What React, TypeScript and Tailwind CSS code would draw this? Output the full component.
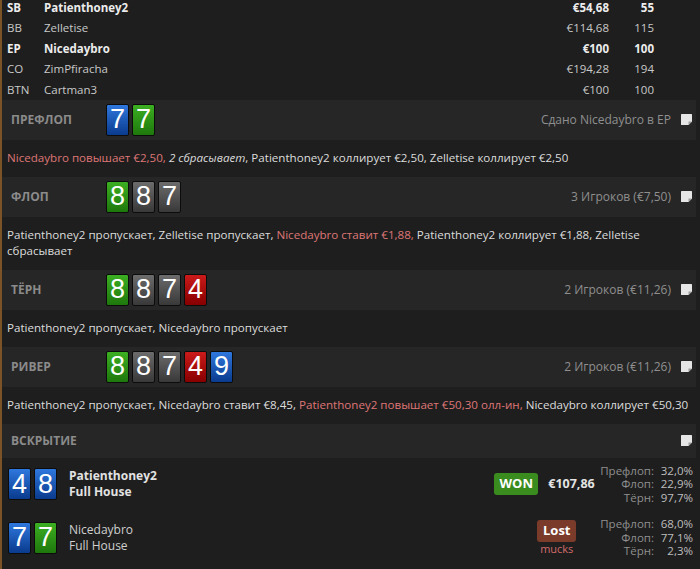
import React from "react";

type Suit = "b" | "g" | "k" | "r";

const suitClass: Record<Suit, string> = {
  b: "bg-linear-to-b from-[#2f78de] to-[#0a3b8e]",
  g: "bg-linear-to-b from-[#3caf22] to-[#1e780c]",
  k: "bg-linear-to-b from-[#6c6c6c] to-[#393939]",
  r: "bg-linear-to-b from-[#cc1a1a] to-[#870000]",
};

function Card({ v, s }: { v: string; s: Suit }) {
  return (
    <div
      className={`w-[23px] h-[32px] rounded-[2px] border border-[#0c0c0c] flex items-center justify-center text-white text-[27px] leading-none font-['Liberation_Sans'] ${suitClass[s]}`}
    >
      {v}
    </div>
  );
}

function Cards({ cards }: { cards: [string, Suit][] }) {
  return (
    <div className="flex gap-[3px]">
      {cards.map(([v, s], i) => (
        <Card key={i} v={v} s={s} />
      ))}
    </div>
  );
}

function NoteIcon() {
  return (
    <svg width="13" height="13" viewBox="0 0 13 13" className="shrink-0">
      <path d="M1.5 1 H11.5 Q12 1 12 1.5 V8.5 L8.5 12 H1.5 Q1 12 1 11.5 V1.5 Q1 1 1.5 1 Z" fill="#e6e6e6" />
      <path d="M12 8.5 L8.5 8.5 L8.5 12 Z" fill="#9c9c9c" />
    </svg>
  );
}

function StreetHeader({
  label,
  cards,
  info,
}: {
  label: string;
  cards?: [string, Suit][];
  info?: string;
}) {
  return (
    <div className="h-[40px] bg-[#262626] flex items-center pl-[9px] pr-[3px] mr-[4px]">
      <div className="w-[95px] text-[12px] font-bold text-[#8b8b8b] uppercase">{label}</div>
      {cards && <Cards cards={cards} />}
      <div className="ml-auto flex items-center gap-[9px] text-[12px] text-[#8f8f8f]">
        {info && <span>{info}</span>}
        <NoteIcon />
      </div>
    </div>
  );
}

function Action({ children }: { children: React.ReactNode }) {
  return (
    <div className="pt-[10px] pb-[11px] pl-[5px] pr-[10px] leading-[16px] text-[11.6px] text-[#dcdcdc]">{children}</div>
  );
}

const R = ({ children }: { children: React.ReactNode }) => (
  <span className="text-[#de7676]">{children}</span>
);

const players = [
  { pos: "SB", name: "Patienthoney2", stack: "€54,68", bb: "55", bold: true },
  { pos: "BB", name: "Zelletise", stack: "€114,68", bb: "115" },
  { pos: "EP", name: "Nicedaybro", stack: "€100", bb: "100", bold: true },
  { pos: "CO", name: "ZimPfiracha", stack: "€194,28", bb: "194" },
  { pos: "BTN", name: "Cartman3", stack: "€100", bb: "100" },
];

function Stats({ rows }: { rows: [string, string][] }) {
  return (
    <div className="grid grid-cols-[auto_36px] gap-x-[3px] text-[11.5px] leading-[13.5px]">
      {rows.map(([l, v]) => (
        <React.Fragment key={l}>
          <span className="text-right text-[#8f8f8f]">{l}</span>
          <span className="text-right text-[#bdbdbd]">{v}</span>
        </React.Fragment>
      ))}
    </div>
  );
}

export default function App() {
  return (
    <div className="min-h-screen h-[569px] overflow-hidden bg-[#1e1e1e] border-l-2 border-[#7a5426] font-['Open_Sans'] text-[11.5px] text-[#d6d6d6]">
      {/* players */}
      <div className="-mt-[3px] pl-[5px]">
        {players.map((p) => (
          <div
            key={p.pos}
            className={`h-[20.5px] flex items-center ${p.bold ? "font-bold text-[#ececec]" : "text-[#c9c9c9]"}`}
          >
            <span className="w-[37px]">{p.pos}</span>
            <span className="flex-1">{p.name}</span>
            <span className="w-[80px] text-right">{p.stack}</span>
            <span className="w-[45px] text-right">{p.bb}</span>
            <span className="w-[46px]" />
          </div>
        ))}
      </div>

      <StreetHeader label="Префлоп" cards={[["7", "b"], ["7", "g"]]} info="Сдано Nicedaybro в EP" />
      <Action>
        <R>Nicedaybro повышает €2,50, </R>
        <i>2 сбрасывает</i>, Patienthoney2 коллирует €2,50, Zelletise коллирует €2,50
      </Action>

      <StreetHeader label="Флоп" cards={[["8", "g"], ["8", "k"], ["7", "k"]]} info="3 Игроков (€7,50)" />
      <Action>
        Patienthoney2 пропускает, Zelletise пропускает, <R>Nicedaybro ставит €1,88,</R> Patienthoney2 коллирует €1,88, Zelletise сбрасывает
      </Action>

      <StreetHeader label="Тёрн" cards={[["8", "g"], ["8", "k"], ["7", "k"], ["4", "r"]]} info="2 Игроков (€11,26)" />
      <Action>Patienthoney2 пропускает, Nicedaybro пропускает</Action>

      <StreetHeader
        label="Ривер"
        cards={[["8", "g"], ["8", "k"], ["7", "k"], ["4", "r"], ["9", "b"]]}
        info="2 Игроков (€11,26)"
      />
      <Action>
        Patienthoney2 пропускает, Nicedaybro ставит €8,45, <R>Patienthoney2 повышает €50,30 олл-ин,</R> Nicedaybro коллирует €50,30
      </Action>

      <div className="h-[34px] flex items-center pl-[9px] pr-[3px] mr-[4px] bg-[#262626]">
        <div className="text-[12px] font-bold text-[#8b8b8b] uppercase">Вскрытие</div>
        <div className="ml-auto">
          <NoteIcon />
        </div>
      </div>

      {/* showdown */}
      <div className="flex items-center h-[53px] pl-[6px] pr-[7px]">
        <Cards cards={[["4", "b"], ["8", "b"]]} />
        <div className="ml-[12px] font-bold text-[12px] leading-[16px] text-[#e2e2e2]">
          <div>Patienthoney2</div>
          <div>Full House</div>
        </div>
        <div className="ml-auto flex items-center">
          <div className="w-[44px] h-[22px] rounded-[3px] bg-[#3b8c1e] text-white font-bold text-[13px] flex items-center justify-center">
            WON
          </div>
          <div className="ml-[10px] w-[52px] font-bold text-[12.5px] text-[#e4e4e4]">€107,86</div>
          <Stats rows={[["Префлоп:", "32,0%"], ["Флоп:", "22,9%"], ["Тёрн:", "97,7%"]]} />
        </div>
      </div>

      <div className="flex items-center h-[54px] pl-[6px] pr-[7px]">
        <Cards cards={[["7", "b"], ["7", "g"]]} />
        <div className="ml-[12px] text-[12px] leading-[16px] text-[#cfcfcf]">
          <div>Nicedaybro</div>
          <div>Full House</div>
        </div>
        <div className="ml-auto flex items-center">
          <div className="flex flex-col items-center">
            <div className="w-[39px] h-[22px] rounded-[3px] bg-[#7b3b2b] text-white font-bold text-[13px] flex items-center justify-center">
              Lost
            </div>
            <div className="text-[11px] leading-[14px] text-[#d26b6b]">mucks</div>
          </div>
          <div className="w-[24px]" />
          <Stats rows={[["Префлоп:", "68,0%"], ["Флоп:", "77,1%"], ["Тёрн:", "2,3%"]]} />
        </div>
      </div>
    </div>
  );
}
